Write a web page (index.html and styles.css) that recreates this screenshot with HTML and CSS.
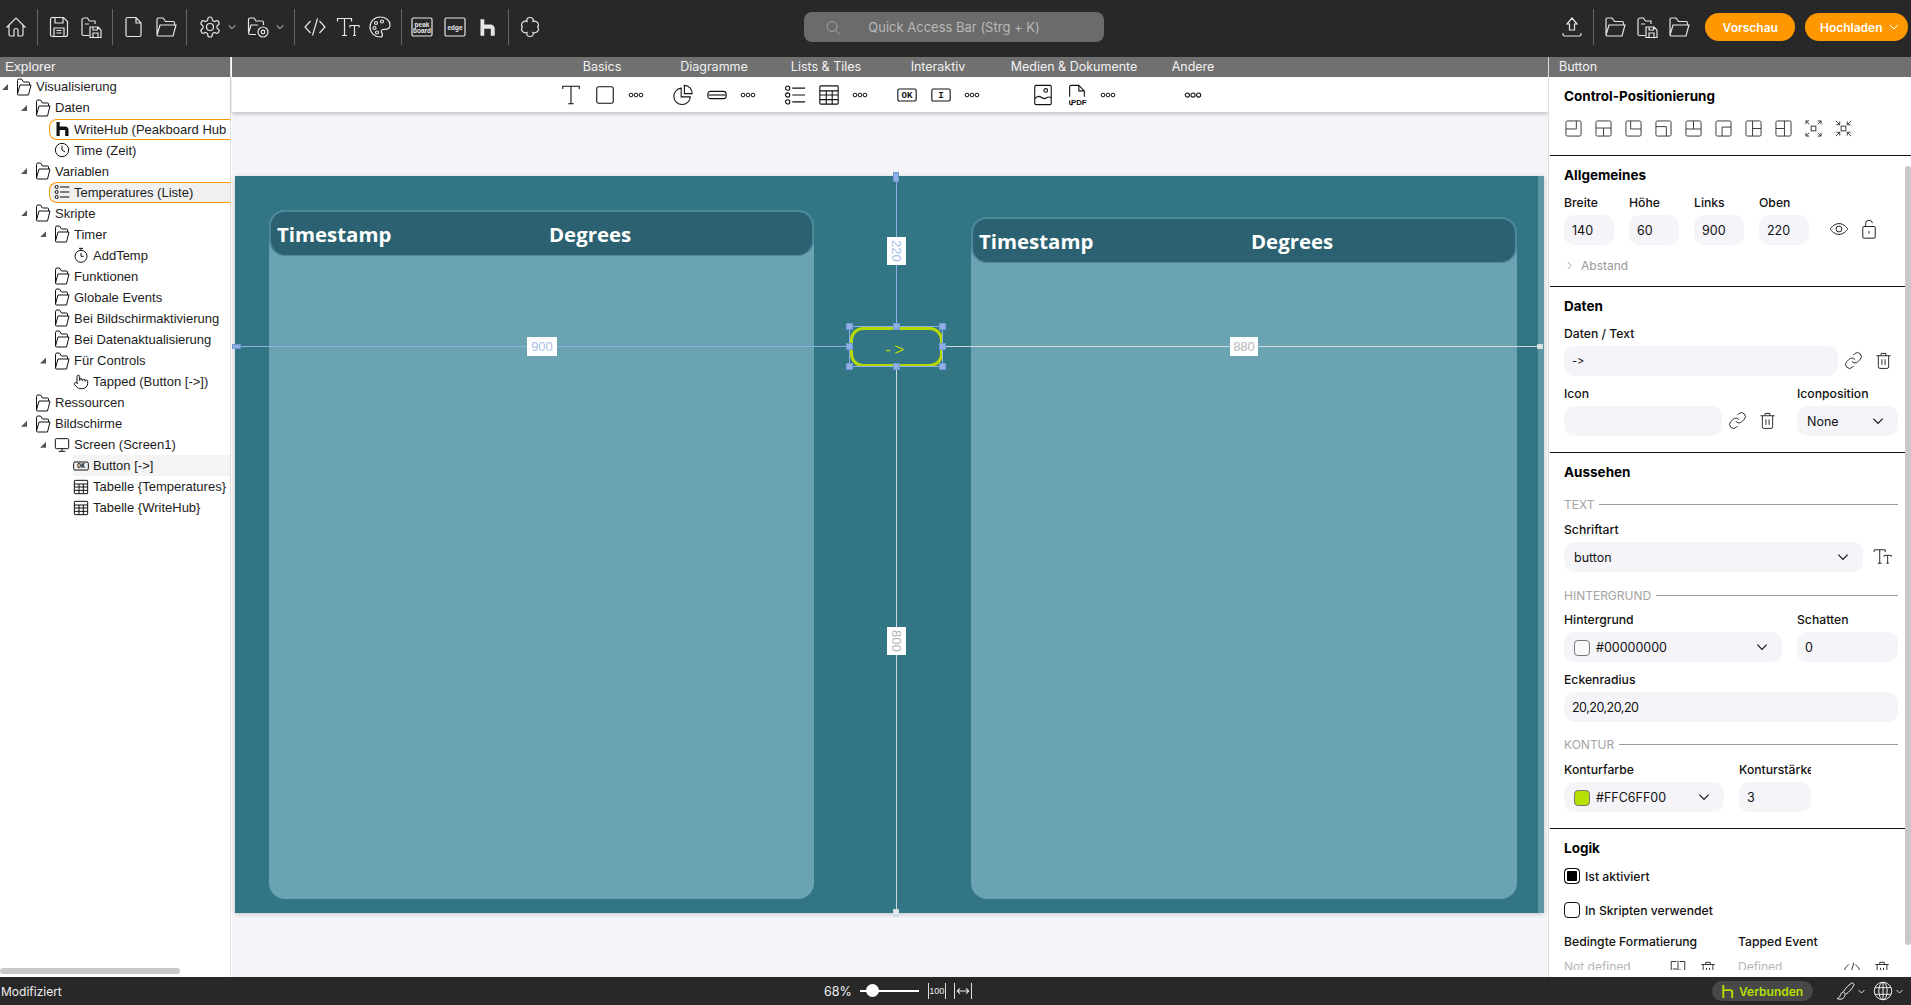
FILE: index.html
```html
<!DOCTYPE html>
<html lang="de">
<head>
<meta charset="utf-8">
<title>Peakboard Designer</title>
<link rel="stylesheet" href="styles.css">
</head>
<body>

<svg class="defs" width="0" height="0">
  <symbol id="home" viewBox="0 0 24 24"><path d="M2.500 12.500 12 3l9.500 9.500M5 10.500v9A1.500 1.500 0 0 0 6.500 21H10v-5.500a2 2 0 0 1 4 0V21h3.500a1.500 1.500 0 0 0 1.500-1.500v-9"/></symbol>
  <symbol id="save" viewBox="0 0 24 24"><path d="M6 2.500h10.500l4 4v13A2 2 0 0 1 18.500 21.500h-13a2 2 0 0 1-2-2v-15a2 2 0 0 1 2.500-2zM8 2.500V8h8V2.500M7 21.500V13h10v8.500M9.500 15.500h5M9.500 18h5"/></symbol>
  <symbol id="saveas" viewBox="0 0 24 24"><path d="M3 19V5a2 2 0 0 1 2-2h3.500l2 3h5.500v3M3 19a1.500 1.500 0 0 0 1.500 1.500H10M6 9h4M11 12h8l3 3v7.500H11zM14 22.500V18h5v4.500M14 12v3h4.500v-3"/></symbol>
  <symbol id="file" viewBox="0 0 24 24"><path d="M6.500 2.500H15l5 5.500v12a1.500 1.500 0 0 1-1.500 1.500h-12A1.500 1.500 0 0 1 5 20V4a1.500 1.500 0 0 1 1.500-1.500zM15 2.500V8h5"/></symbol>
  <symbol id="folder" viewBox="0 0 24 24"><path d="M3 20V4.500A1.500 1.500 0 0 1 4.500 3h4.500l2.500 3.500H19a1.500 1.500 0 0 1 1.500 1.500v2M3 20l3-10h16l-3 11H4.500A1.500 1.500 0 0 1 3 20z"/></symbol>
  <symbol id="tfolder" viewBox="0 0 15 18"><path d="M1 16V2.500A1.500 1.500 0 0 1 2.500 1H5l2 3h5a1 1 0 0 1 1 1v2M1 16l2.500-9H14.500L12 17H2a1 1 0 0 1-1-1z"/></symbol>
  <symbol id="gear" viewBox="0 0 24 24"><path d="M12.220 2h-.44a2 2 0 0 0-2 2v.18a2 2 0 0 1-1 1.730l-.43.250a2 2 0 0 1-2 0l-.15-.080a2 2 0 0 0-2.730.730l-.22.380a2 2 0 0 0 .730 2.730l.15.100a2 2 0 0 1 1 1.720v.510a2 2 0 0 1-1 1.740l-.15.090a2 2 0 0 0-.730 2.730l.22.380a2 2 0 0 0 2.730.730l.15-.080a2 2 0 0 1 2 0l.43.250a2 2 0 0 1 1 1.730V20a2 2 0 0 0 2 2h.44a2 2 0 0 0 2-2v-.18a2 2 0 0 1 1-1.730l.43-.250a2 2 0 0 1 2 0l.15.080a2 2 0 0 0 2.730-.730l.22-.390a2 2 0 0 0-.730-2.730l-.15-.080a2 2 0 0 1-1-1.740v-.5a2 2 0 0 1 1-1.740l.15-.090a2 2 0 0 0 .730-2.730l-.22-.380a2 2 0 0 0-2.730-.730l-.15.080a2 2 0 0 1-2 0l-.43-.250a2 2 0 0 1-1-1.730V4a2 2 0 0 0-2-2z"/><circle cx="12" cy="12" r="3.500"/></symbol>
  <symbol id="foldergear" viewBox="0 0 24 24"><path d="M2.500 18V4.500A1.500 1.500 0 0 1 4 3h4l2 3h6a1.500 1.500 0 0 1 1.500 1.500V10M2.500 18 5 10h7M2.500 18A1.500 1.500 0 0 0 4 19.500h6"/><circle cx="17" cy="17" r="5"/><circle cx="17" cy="17" r="1.800"/></symbol>
  <symbol id="code" viewBox="0 0 24 24"><path d="M7.500 6 2 12l5.500 6M16.500 6 22 12l-5.500 6M14.500 3.500l-5 17"/></symbol>
  <symbol id="tt" viewBox="0 0 24 24"><path d="M1.500 6.500V3.500h14v3M8.500 3.500V20.500M6 20.500h5M14 12.500v-2h9v2M18.500 10.500V20.500M17 20.500h3"/></symbol>
  <symbol id="bigt" viewBox="0 0 24 24"><path d="M3 5.500V2.500h18v3M12 2.500V21.500M9 21.500h6"/></symbol>
  <symbol id="palette" viewBox="0 0 24 24"><path d="M12 2a10 10 0 0 0 0 20c1.500 0 2.500-1 2.500-2.300 0-.6-.3-1.100-.6-1.600-.4-.5-.6-1-.6-1.600 0-1.300 1-2.200 2.300-2.200H18a4 4 0 0 0 4-4.300C22 5.500 17.500 2 12 2z"/><circle cx="8" cy="8" r="1.500"/><circle cx="14" cy="6.500" r="1.500"/><circle cx="6.500" cy="13" r="1.500"/><circle cx="9" cy="17.500" r="1.500"/></symbol>
  <symbol id="puzzle" viewBox="0 0 24 24"><path d="M9 6.500C8 3.500 10 2.500 12 2.500s4 1 3 4c3-1 5.500 1 5.500 3.500 0 1.500-1 2-1.500 2 .5 0 1.500.5 1.500 2 0 2.500-2.500 4.500-5.500 3.500 1 3-1 4-3 4s-4-1-3-4c-3 1-5.500-1-5.500-3.500 0-1.500 1-2 1.500-2-.5 0-1.500-.5-1.500-2C3.500 7.500 6 5.500 9 6.500z"/></symbol>
  <symbol id="upload" viewBox="0 0 24 24"><path d="M12 3l5 6h-2.500v6h-5V9H7zM3 18v1.500A1.500 1.500 0 0 0 4.500 21h15a1.500 1.500 0 0 0 1.500-1.500V18"/></symbol>
  <symbol id="search" viewBox="0 0 24 24"><circle cx="10.500" cy="10.500" r="7.500"/><path d="M16 16l6 6.500"/></symbol>
  <symbol id="chev" viewBox="0 0 24 24"><path d="M4 8l8 8 8-8"/></symbol>
  <symbol id="chevr" viewBox="0 0 24 24"><path d="M8 4l8 8-8 8"/></symbol>
  <symbol id="eye" viewBox="0 0 24 24"><path d="M1.500 12S5.500 5.500 12 5.500 22.500 12 22.500 12 18.500 18.500 12 18.500 1.500 12 1.500 12z"/><circle cx="12" cy="12" r="3.500"/></symbol>
  <symbol id="lock" viewBox="0 0 24 24"><rect x="4.500" y="9" width="15" height="14" rx="1.500"/><path d="M8 9V5a4 3.500 0 0 1 8 0M12 14.500v3"/></symbol>
  <symbol id="link" viewBox="0 0 24 24"><path d="M10 13a5 5 0 0 0 7.540.54l3-3a5 5 0 0 0-7.070-7.070l-1.720 1.710"/><path d="M14 11a5 5 0 0 0-7.540-.54l-3 3a5 5 0 0 0 7.070 7.070l1.710-1.710"/></symbol>
  <symbol id="trash" viewBox="0 0 24 24"><path d="M3 6h18M9 6V3h6v3M5.500 6v14a2 2 0 0 0 2 2h9a2 2 0 0 0 2-2V6M10 10.500v7M14 10.500v7"/></symbol>
  <symbol id="dots" viewBox="0 0 24 8"><circle cx="4.500" cy="4" r="2.800"/><circle cx="12" cy="4" r="2.800"/><circle cx="19.500" cy="4" r="2.800"/></symbol>
  <symbol id="pie" viewBox="0 0 24 24"><path d="M10 4.500a9 9 0 1 0 10 9.500H10zM13.500 1.500V10.500H22a8.500 8.500 0 0 0-8.500-9z"/></symbol>
  <symbol id="toggle" viewBox="0 0 24 24"><rect x="2" y="8" width="20" height="8" rx="3"/><path d="M2.500 12h19"/></symbol>
  <symbol id="list" viewBox="0 0 24 24"><circle cx="4" cy="4.500" r="2.300"/><circle cx="4" cy="12" r="2.300"/><circle cx="4" cy="19.500" r="2.300"/><path d="M9 4.500h14M9 12h14M9 19.500h14"/></symbol>
  <symbol id="table" viewBox="0 0 24 24"><rect x="2" y="2" width="20" height="20" rx="1"/><path d="M2 7.500h20M2 12h20M2 17h20M9 7.500V22M15.500 7.500V22"/></symbol>
  <symbol id="image" viewBox="0 0 24 24"><rect x="3" y="1.500" width="18" height="21" rx="1.500"/><circle cx="15" cy="7" r="2"/><path d="M3 16c3-3.500 5-3 7-1.500s4 2 6 .5 3-1 5 0"/></symbol>
  <symbol id="pdf" viewBox="0 0 24 24"><path d="M4 14V3a1.500 1.500 0 0 1 1.500-1.500H14l6 6V14M4 18v3a1.500 1.500 0 0 0 1.500 1.500H7M14 1.500v6h6"/></symbol>
  <symbol id="clock" viewBox="0 0 24 24"><circle cx="12" cy="12" r="10"/><path d="M12 5.500V12l4.500 3"/></symbol>
  <symbol id="timer" viewBox="0 0 24 24"><circle cx="12" cy="14" r="9"/><path d="M9 2h6M12 2v3M12 9v5h4"/></symbol>
  <symbol id="hand" viewBox="0 0 24 24"><path d="M18 11v-1a2 2 0 0 0-2-2 2 2 0 0 0-2 2M14 10V9a2 2 0 0 0-2-2 2 2 0 0 0-2 2v1M10 9.500V4a2 2 0 0 0-2-2 2 2 0 0 0-2 2v10M18 11a2 2 0 1 1 4 0v3a8 8 0 0 1-8 8h-2c-2.800 0-4.500-.860-5.990-2.340l-3.600-3.600a2 2 0 0 1 2.830-2.820L7 15"/></symbol>
  <symbol id="monitor" viewBox="0 0 24 24"><rect x="2" y="2.500" width="20" height="15" rx="1.500"/><path d="M12 17.500V21M7 21.500h10"/></symbol>
  <symbol id="brush" viewBox="0 0 24 24"><path d="M21 2c-4 2-8 6-11 11l3 3c4-3 8-7 10-12zM9.500 13.500C6.500 14 7 17 5.500 19c-.5.800-1.500 1.500-3 2 3 1.500 7 1 8.500-1.500 1-1.500.9-2.500.9-3.600"/></symbol>
  <symbol id="globe" viewBox="0 0 24 24"><circle cx="12" cy="12" r="10.500"/><ellipse cx="12" cy="12" rx="5" ry="10.500"/><path d="M12 1.500v21M2.500 8h19M2.500 16h19"/></symbol>
  <symbol id="swap" viewBox="0 0 24 24"><path d="M10 2H3v20h7M14 2h7v20h-7M12 1v22M5 12h6M14 12l3 3"/></symbol>
  <symbol id="arrows" viewBox="0 0 16 16"><path d="M1.500 8h13M4.500 5l-3 3 3 3M11.500 5l3 3-3 3"/></symbol>
  <symbol id="logo" viewBox="0 0 16 16"><path class="solid" d="M2.500 1h3.200v14H2.500zM5.700 5.500H11A3.500 3.500 0 0 1 14.500 9v6H11.200V9H5.700z"/></symbol>
  <symbol id="logoline" viewBox="0 0 16 16"><path class="solid" d="M2.500 1h2v14h-2zM4.500 5.500H11a3 3 0 0 1 3 3V15h-2V8.500a1 1 0 0 0-1-1H4.500z"/></symbol>
  <symbol id="pos1" viewBox="0 0 18 18"><rect x="1" y="1" width="16" height="16" rx="1.500"/><path d="M1 9.500h11V1"/></symbol>
  <symbol id="pos2" viewBox="0 0 18 18"><rect x="1" y="1" width="16" height="16" rx="1.500"/><path d="M1 8.500h16M9 8.500V17"/></symbol>
  <symbol id="pos3" viewBox="0 0 18 18"><rect x="1" y="1" width="16" height="16" rx="1.500"/><path d="M17 9.500H6V1"/></symbol>
  <symbol id="pos4" viewBox="0 0 18 18"><rect x="1" y="1" width="16" height="16" rx="1.500"/><path d="M1 7h11v10"/></symbol>
  <symbol id="pos5" viewBox="0 0 18 18"><rect x="1" y="1" width="16" height="16" rx="1.500"/><path d="M1 9.500h16M9 9.500V1"/></symbol>
  <symbol id="pos6" viewBox="0 0 18 18"><rect x="1" y="1" width="16" height="16" rx="1.500"/><path d="M17 7.500H7.500V17"/></symbol>
  <symbol id="pos7" viewBox="0 0 18 18"><rect x="1" y="1" width="16" height="16" rx="1.500"/><path d="M8 1v16M8 9h9"/></symbol>
  <symbol id="pos8" viewBox="0 0 18 18"><rect x="1" y="1" width="16" height="16" rx="1.500"/><path d="M10 1v16M1 9h9"/></symbol>
  <symbol id="expand" viewBox="0 0 18 18"><rect x="6.500" y="6.500" width="5" height="5"/><path d="M1 4.500V1h3.500M1 1l3.500 3.500M17 4.500V1h-3.500M17 1l-3.500 3.500M1 13.500V17h3.500M1 17l3.500-3.500M17 13.500V17h-3.500M17 17l-3.500-3.500"/></symbol>
  <symbol id="shrink" viewBox="0 0 18 18"><rect x="6.500" y="6.500" width="5" height="5"/><path d="M1 1l4 4M5 1.500V5H1.500M17 1l-4 4M13 1.500V5h3.500M1 17l4-4M5 16.500V13H1.500M17 17l-4-4M13 16.500V13h3.500"/></symbol>
</svg>

<div class="app">

  <header class="topbar">
    <div class="tools">
      <svg class="ic"><use href="#home"/></svg>
      <i class="sep"></i>
      <svg class="ic"><use href="#save"/></svg>
      <svg class="ic"><use href="#saveas"/></svg>
      <i class="sep"></i>
      <svg class="ic"><use href="#file"/></svg>
      <svg class="ic"><use href="#folder"/></svg>
      <i class="sep sep-a"></i>
      <svg class="ic"><use href="#gear"/></svg>
      <svg class="ic-chev"><use href="#chev"/></svg>
      <svg class="ic"><use href="#foldergear"/></svg>
      <svg class="ic-chev"><use href="#chev"/></svg>
      <i class="sep"></i>
      <svg class="ic"><use href="#code"/></svg>
      <svg class="ic"><use href="#tt"/></svg>
      <svg class="ic"><use href="#palette"/></svg>
      <i class="sep"></i>
      <svg class="ic" viewBox="0 0 24 24"><rect x="2" y="3" width="20" height="18" rx="1.500"/><text class="tiny" x="12" y="11.500" font-size="6.500">peak</text><text class="tiny" x="12" y="17.500" font-size="6.500">board</text></svg>
      <svg class="ic" viewBox="0 0 24 24"><rect x="2" y="3" width="20" height="18" rx="1.500"/><text class="tiny" x="12" y="14.500" font-size="6.500">edge</text></svg>
      <svg class="ic ic-logo"><use href="#logo"/></svg>
      <i class="sep sep-b"></i>
      <svg class="ic"><use href="#puzzle"/></svg>
    </div>

    <div class="quick">
      <svg class="quick-ic"><use href="#search"/></svg>
      <span>Quick Access Bar (Strg + K)</span>
    </div>

    <div class="tools tools-right">
      <svg class="ic"><use href="#upload"/></svg>
      <i class="sep"></i>
      <svg class="ic"><use href="#folder"/></svg>
      <svg class="ic"><use href="#saveas"/></svg>
      <svg class="ic"><use href="#folder"/></svg>
      <button class="btn btn-preview">Vorschau</button>
      <button class="btn btn-upload">Hochladen <svg class="btn-chev"><use href="#chev"/></svg></button>
    </div>
  </header>

  <div class="main">

    <aside class="explorer">
      <div class="band band-left">Explorer</div>
      <div class="tree">
        <div class="row l0"><span class="arrow on"></span><svg class="ti tf"><use href="#tfolder"/></svg>Visualisierung</div>
        <div class="row l1"><span class="arrow on"></span><svg class="ti tf"><use href="#tfolder"/></svg>Daten</div>
        <div class="row l2 sel"><svg class="ti"><use href="#logo"/></svg>WriteHub (Peakboard Hub</div>
        <div class="row l2"><span class="arrow"></span><svg class="ti"><use href="#clock"/></svg>Time (Zeit)</div>
        <div class="row l1"><span class="arrow on"></span><svg class="ti tf"><use href="#tfolder"/></svg>Variablen</div>
        <div class="row l2 sel sel-grey"><svg class="ti"><use href="#list"/></svg>Temperatures (Liste)</div>
        <div class="row l1"><span class="arrow on"></span><svg class="ti tf"><use href="#tfolder"/></svg>Skripte</div>
        <div class="row l2"><span class="arrow on"></span><svg class="ti tf"><use href="#tfolder"/></svg>Timer</div>
        <div class="row l3"><span class="arrow"></span><svg class="ti"><use href="#timer"/></svg>AddTemp</div>
        <div class="row l2"><span class="arrow"></span><svg class="ti tf"><use href="#tfolder"/></svg>Funktionen</div>
        <div class="row l2"><span class="arrow"></span><svg class="ti tf"><use href="#tfolder"/></svg>Globale Events</div>
        <div class="row l2"><span class="arrow"></span><svg class="ti tf"><use href="#tfolder"/></svg>Bei Bildschirmaktivierung</div>
        <div class="row l2"><span class="arrow"></span><svg class="ti tf"><use href="#tfolder"/></svg>Bei Datenaktualisierung</div>
        <div class="row l2"><span class="arrow on"></span><svg class="ti tf"><use href="#tfolder"/></svg>Für Controls</div>
        <div class="row l3"><span class="arrow"></span><svg class="ti"><use href="#hand"/></svg>Tapped (Button [-&gt;])</div>
        <div class="row l1"><span class="arrow"></span><svg class="ti tf"><use href="#tfolder"/></svg>Ressourcen</div>
        <div class="row l1"><span class="arrow on"></span><svg class="ti tf"><use href="#tfolder"/></svg>Bildschirme</div>
        <div class="row l2"><span class="arrow on"></span><svg class="ti"><use href="#monitor"/></svg>Screen (Screen1)</div>
        <div class="row l3 hover"><svg class="ti" viewBox="0 0 24 24"><rect x="1" y="6" width="22" height="12" rx="2"/><text class="tiny tiny-b" x="12" y="15.500" font-size="10">OK</text></svg>Button [-&gt;]</div>
        <div class="row l3"><span class="arrow"></span><svg class="ti"><use href="#table"/></svg>Tabelle {Temperatures}</div>
        <div class="row l3"><span class="arrow"></span><svg class="ti"><use href="#table"/></svg>Tabelle {WriteHub}</div>
      </div>
      <div class="hscroll"></div>
    </aside>

    <section class="center">
      <div class="band ribbon-grid">
        <span>Basics</span><span>Diagramme</span><span>Lists &amp; Tiles</span><span>Interaktiv</span><span>Medien &amp; Dokumente</span><span>Andere</span>
      </div>
      <div class="toolbar ribbon-grid">
        <div class="group">
          <svg class="ri"><use href="#bigt"/></svg>
          <svg class="ri" viewBox="0 0 24 24"><rect x="3" y="3" width="18" height="18" rx="2"/></svg>
          <svg class="rd" viewBox="0 0 24 8"><use href="#dots"/></svg>
        </div>
        <div class="group">
          <svg class="ri"><use href="#pie"/></svg>
          <svg class="ri"><use href="#toggle"/></svg>
          <svg class="rd" viewBox="0 0 24 8"><use href="#dots"/></svg>
        </div>
        <div class="group">
          <svg class="ri"><use href="#list"/></svg>
          <svg class="ri"><use href="#table"/></svg>
          <svg class="rd" viewBox="0 0 24 8"><use href="#dots"/></svg>
        </div>
        <div class="group">
          <svg class="ri" viewBox="0 0 24 24"><rect x="2" y="5.500" width="20" height="13" rx="1.500"/><text class="tiny tiny-b" x="12" y="15.500" font-size="10">OK</text></svg>
          <svg class="ri" viewBox="0 0 24 24"><rect x="2" y="5.500" width="20" height="13" rx="1.500"/><text class="tiny tiny-b" x="12" y="15.500" font-size="10">I</text></svg>
          <svg class="rd" viewBox="0 0 24 8"><use href="#dots"/></svg>
        </div>
        <div class="group">
          <svg class="ri"><use href="#image"/></svg>
          <svg class="ri" viewBox="0 0 24 24"><use href="#pdf"/><text class="tiny" x="14" y="22.500" font-size="8.500">PDF</text></svg>
          <svg class="rd" viewBox="0 0 24 8"><use href="#dots"/></svg>
        </div>
        <div class="group">
          <svg class="rd rd-big" viewBox="0 0 24 8"><use href="#dots"/></svg>
        </div>
      </div>

      <div class="stage">
        <div class="canvas">
          <div class="table table-one">
            <div class="thead"><span class="th-a">Timestamp</span><span>Degrees</span></div>
          </div>
          <div class="table table-two">
            <div class="thead"><span class="th-a">Timestamp</span><span>Degrees</span></div>
          </div>

          <div class="guide guide-left"></div>
          <div class="guide guide-right"></div>
          <div class="guide guide-top"></div>
          <div class="guide guide-bottom"></div>
          <div class="guide-end end-left"></div>
          <div class="guide-end end-right"></div>
          <div class="guide-end end-top"></div>
          <div class="guide-end end-bottom"></div>

          <div class="tag tag-900">900</div>
          <div class="tag tag-880">880</div>
          <div class="tag tag-v tag-220">220</div>
          <div class="tag tag-v tag-800">800</div>

          <div class="ctl">-&gt;</div>
          <div class="sel-box">
            <i class="grip g1"></i><i class="grip g2"></i><i class="grip g3"></i>
            <i class="grip g4"></i><i class="grip g5"></i>
            <i class="grip g6"></i><i class="grip g7"></i><i class="grip g8"></i>
          </div>
        </div>
      </div>
    </section>

    <aside class="panel">
      <div class="band band-panel">Button</div>
      <div class="props">

        <section class="sec sec-pos">
          <h3>Control-Positionierung</h3>
          <div class="pos-row">
            <svg class="pi"><use href="#pos1"/></svg>
            <svg class="pi"><use href="#pos2"/></svg>
            <svg class="pi"><use href="#pos3"/></svg>
            <svg class="pi"><use href="#pos4"/></svg>
            <svg class="pi"><use href="#pos5"/></svg>
            <svg class="pi"><use href="#pos6"/></svg>
            <svg class="pi"><use href="#pos7"/></svg>
            <svg class="pi"><use href="#pos8"/></svg>
            <svg class="pi"><use href="#expand"/></svg>
            <svg class="pi"><use href="#shrink"/></svg>
          </div>
        </section>

        <section class="sec sec-gen">
          <h3>Allgemeines</h3>
          <div class="fields">
            <div class="f w50"><label>Breite</label><div class="inp">140</div></div>
            <div class="f w50"><label>Höhe</label><div class="inp">60</div></div>
            <div class="f w50"><label>Links</label><div class="inp">900</div></div>
            <div class="f w50"><label>Oben</label><div class="inp">220</div></div>
            <svg class="act act-eye"><use href="#eye"/></svg>
            <svg class="act act-lock"><use href="#lock"/></svg>
          </div>
          <div class="more"><svg class="more-chev"><use href="#chevr"/></svg>Abstand</div>
        </section>

        <section class="sec sec-data">
          <h3>Daten</h3>
          <div class="fields">
            <div class="f w274"><label>Daten / Text</label><div class="inp inp-small">-&gt;</div></div>
            <svg class="act act-first"><use href="#link"/></svg>
            <svg class="act"><use href="#trash"/></svg>
          </div>
          <div class="fields">
            <div class="f w158"><label>Icon</label><div class="inp"></div></div>
            <svg class="act act-first"><use href="#link"/></svg>
            <svg class="act"><use href="#trash"/></svg>
            <div class="f w101 f-pos"><label>Iconposition</label><div class="inp sel-inp">None<svg class="dd"><use href="#chev"/></svg></div></div>
          </div>
        </section>

        <section class="sec sec-look">
          <h3>Aussehen</h3>
          <div class="cap"><span>TEXT</span></div>
          <div class="fields">
            <div class="f w299"><label>Schriftart</label><div class="inp sel-inp">button<svg class="dd"><use href="#chev"/></svg></div></div>
            <svg class="act act-tt"><use href="#tt"/></svg>
          </div>
          <div class="cap cap-next"><span>HINTERGRUND</span></div>
          <div class="fields fields-tight">
            <div class="f w218"><label>Hintergrund</label><div class="inp sel-inp"><i class="swatch"></i>#00000000<svg class="dd"><use href="#chev"/></svg></div></div>
            <div class="f w101 f-shadow"><label>Schatten</label><div class="inp">0</div></div>
          </div>
          <div class="fields">
            <div class="f wfull"><label>Eckenradius</label><div class="inp inp-tight">20,20,20,20</div></div>
          </div>
          <div class="cap"><span>KONTUR</span></div>
          <div class="fields">
            <div class="f w160"><label>Konturfarbe</label><div class="inp sel-inp"><i class="swatch swatch-lime"></i>#FFC6FF00<svg class="dd"><use href="#chev"/></svg></div></div>
            <div class="f w72"><label>Konturstärke</label><div class="inp">3</div></div>
          </div>
        </section>

        <section class="sec sec-logic">
          <h3>Logik</h3>
          <div class="check check-first"><i class="box box-on"></i>Ist aktiviert</div>
          <div class="check"><i class="box"></i>In Skripten verwendet</div>
          <div class="logic-cols">
            <div class="lc lc-a">
              <label>Bedingte Formatierung</label>
              <div class="lc-row"><span>Not defined</span><svg class="act"><use href="#swap"/></svg><svg class="act"><use href="#trash"/></svg></div>
            </div>
            <div class="lc lc-b">
              <label>Tapped Event</label>
              <div class="lc-row"><span>Defined</span><svg class="act"><use href="#code"/></svg><svg class="act"><use href="#trash"/></svg></div>
            </div>
          </div>
        </section>
      </div>
      <div class="vscroll"></div>
    </aside>
  </div>

  <footer class="status">
    <span class="status-left">Modifiziert</span>
    <div class="zoombox">
      <span class="pct">68%</span>
      <div class="slider"><i></i></div>
      <span class="fit">100</span>
      <span class="fit"><svg class="fit-ic"><use href="#arrows"/></svg></span>
    </div>
    <div class="status-right">
      <div class="conn"><svg class="conn-ic"><use href="#logoline"/></svg>Verbunden</div>
      <svg class="st-ic"><use href="#brush"/></svg><svg class="st-chev"><use href="#chev"/></svg>
      <svg class="st-ic st-globe"><use href="#globe"/></svg><svg class="st-chev"><use href="#chev"/></svg>
    </div>
  </footer>
</div>

</body>
</html>
```

FILE: styles.css
```css
* { box-sizing: border-box; }

html, body {
  margin: 0;
  height: 100%;
  overflow: hidden;
  background: #fff;
}

body {
  font-family: "Inter", "Liberation Sans", sans-serif;
  font-size: 12px;
  color: #111;
  font-feature-settings: "calt" 0;
}

.defs { position: absolute; }

svg {
  fill: none;
  stroke: currentColor;
  stroke-width: 1.2;
  display: block;
  flex: none;
}
.solid { fill: currentColor; stroke: none; }
.tiny {
  font-family: "Liberation Sans", sans-serif;
  fill: currentColor;
  stroke: none;
  text-anchor: middle;
  font-weight: bold;
}
.tiny-b { font-family: "Liberation Mono", monospace; }

.app {
  display: flex;
  flex-direction: column;
  height: 1005px;
}

/* top bar */
.topbar {
  height: 57px;
  flex: none;
  background: #282828;
  color: #e6e6e6;
  display: flex;
  align-items: center;
  padding: 0 3px 3px 4px;
}
.tools {
  display: flex;
  align-items: center;
  gap: 8.250px;
}
.ic { width: 24px; height: 24px; }
.ic-logo { height: 19px; }
.ic-chev { width: 10px; height: 10px; margin-left: -3px; stroke-width: 2.400; }
.sep {
  width: 1px;
  height: 36px;
  margin: 0 .5px;
  background: #666;
}
.sep-a { margin-right: 2.500px; }
.sep-b { margin-right: 1.500px; }
.quick {
  width: 300px;
  height: 30px;
  margin-left: 262px;
  border-radius: 8px;
  background: #6b6b6b;
  color: #b9b9b9;
  font-size: 13px;
  display: flex;
  align-items: center;
  padding-left: 21px;
}
.quick-ic { width: 16px; height: 17px; margin-right: 27px; stroke-width: 1.1; }
.tools-right { margin-left: auto; }
.btn {
  height: 28px;
  border: 0;
  border-radius: 14px;
  background: #ff9800;
  color: #fff;
  font-family: inherit;
  font-size: 12px;
  font-weight: 600;
  display: flex;
  align-items: center;
  padding: 0;
}
.btn-preview { width: 90px; margin-left: 6px; justify-content: center; }
.btn-upload { width: 103px; margin-left: 1.500px; padding-left: 15px; gap: 5px; }
.btn-chev { width: 12px; height: 12px; stroke-width: 2; }

/* layout */
.main {
  flex: 1;
  display: flex;
  min-height: 0;
}
.band {
  height: 20px;
  flex: none;
  background: #707070;
  color: #f2f2f2;
  font-size: 12.500px;
  line-height: 20px;
}
.band-left { padding-left: 5px; font-family: "Liberation Sans", sans-serif; font-size: 13.600px; }
.band-panel { padding-left: 10px; }

/* explorer */
.explorer {
  width: 231px;
  flex: none;
  display: flex;
  flex-direction: column;
  border-right: 1px solid #ddd;
  position: relative;
}
.tree {
  flex: 1;
  margin-top: -.6px;
  font-family: "Liberation Sans", sans-serif;
  font-size: 13px;
  color: #1c1c1c;
  white-space: nowrap;
  overflow: hidden;
}
.row {
  height: 21.050px;
  display: flex;
  align-items: center;
}
.l0 { padding-left: 2px; }
.l1 { padding-left: 21px; }
.l2 { padding-left: 40px; }
.l3 { padding-left: 59px; }
.arrow { width: 14px; height: 6px; flex: none; }
.arrow.on::before {
  content: "";
  display: block;
  width: 6px;
  height: 6px;
  background: #555;
  clip-path: polygon(100% 0, 100% 100%, 0 100%);
}
.ti { width: 16px; height: 16px; margin-right: 4px; stroke-width: 1.500; color: #111; }
.tf { height: 18px; stroke-width: 1; }
.sel {
  margin-left: 49px;
  padding-left: 4px;
  border: 1px solid #ff9800;
  border-right: 0;
  border-radius: 8px 0 0 8px;
}
.sel-grey { background: #f0f0f0; }
.hover {
  margin-left: 73px;
  padding-left: 0;
  background: #f4f4f4;
}
.hscroll {
  position: absolute;
  left: 0;
  bottom: 3px;
  width: 180px;
  height: 6px;
  border-radius: 3px;
  background: #c8c8c8;
}

/* center */
.center {
  flex: 1;
  min-width: 0;
  display: flex;
  flex-direction: column;
  border-left: 1px solid #fff;
}
.ribbon-grid {
  display: grid;
  grid-template-columns: 112px 112px 112px 112px 160px 78px;
  padding-left: 314px;
  text-align: center;
}
.toolbar {
  height: 35px;
  flex: none;
  background: #fff;
  box-shadow: 0 2px 4px rgba(0, 0, 0, .22);
  position: relative;
  color: #111;
}
.group {
  display: flex;
  align-items: center;
  justify-content: center;
  gap: 12px;
}
.ri { width: 22px; height: 22px; }
.rd { width: 16px; height: 6px; stroke-width: 1.500; }
.rd-big { width: 18px; stroke-width: 1.400; }

.stage {
  flex: 1;
  min-height: 0;
  background: #f4f4f9;
  padding: 64px 0 0 3px;
}
.canvas {
  position: relative;
  width: 1309px;
  height: 737px;
  background: #327686;
  border-right: 6px solid #5f97a5;
  box-shadow: 0 1px 5px rgba(0, 0, 0, .2);
}

.table {
  position: absolute;
  background: #6aa3b2;
  border-radius: 16px;
}
.table-one { left: 34px; top: 34px; width: 545px; height: 689px; }
.table-two { left: 736px; top: 41px; width: 546px; height: 682px; }
.thead {
  height: 46px;
  display: flex;
  align-items: center;
  padding-left: 6px;
  background: #2b6170;
  border: 2px solid #4a8797;
  border-bottom-width: 1px;
  border-radius: 16px;
  color: #fff;
  font-family: "Open Sans", sans-serif;
  font-size: 20.400px;
  font-weight: 700;
}
.th-a { width: 272px; }

/* selection guides */
.guide { position: absolute; background: #8fb0e3; }
.guide-left { left: 0; top: 170px; width: 614px; height: 1px; }
.guide-right { left: 710px; top: 170px; width: 598px; height: 1px; background: #cdd8dc; }
.guide-top { left: 661px; top: 0; width: 1px; height: 150px; }
.guide-bottom { left: 661px; top: 191px; width: 1px; height: 546px; background: #cdd8dc; }
.guide-end {
  position: absolute;
  background: #8fb0e3;
  border: 1px solid #6f98d4;
}
.end-left { left: -3px; top: 168px; width: 9px; height: 5px; }
.end-right { left: 1302px; top: 168px; width: 6px; height: 5px; background: #dfe6ea; border-color: #cdd8dc; }
.end-top { left: 658px; top: -4px; width: 6px; height: 10px; }
.end-bottom { left: 658px; top: 733px; width: 6px; height: 8px; background: #dfe6ea; border-color: #cdd8dc; }

.tag {
  position: absolute;
  background: #fff;
  color: #a7bfe9;
  font-family: "Liberation Sans", sans-serif;
  font-size: 13px;
  display: flex;
  align-items: center;
  justify-content: center;
}
.tag-900 { left: 292px; top: 161px; width: 30px; height: 19px; }
.tag-880 { left: 995px; top: 161px; width: 28px; height: 19px; color: #b5b5b5; }
.tag-v { width: 19px; height: 28px; writing-mode: vertical-rl; }
.tag-220 { left: 652px; top: 61px; }
.tag-800 { left: 652px; top: 451px; color: #b5b5b5; }

.ctl {
  position: absolute;
  left: 615px;
  top: 151px;
  width: 93px;
  height: 40px;
  border: 3px solid #b5d800;
  border-radius: 13px;
  color: #b5d800;
  font-family: "Liberation Sans", sans-serif;
  font-size: 17px;
  letter-spacing: 3.500px;
  padding-top: 11px;
  line-height: 18px;
  text-align: center;
}
.sel-box {
  position: absolute;
  left: 614px;
  top: 150px;
  width: 94px;
  height: 41px;
  border: 1px solid #8fb0e3;
}
.grip {
  position: absolute;
  width: 7px;
  height: 7px;
  background: #8fb0e3;
  border: 1px solid #6f98d4;
}
.g1 { left: -4px; top: -4px; }
.g2 { left: 43px; top: -4px; }
.g3 { right: -4px; top: -4px; }
.g4 { left: -4px; top: 16px; }
.g5 { right: -4px; top: 16px; }
.g6 { left: -4px; bottom: -4px; }
.g7 { left: 43px; bottom: -4px; }
.g8 { right: -4px; bottom: -4px; }

/* properties */
.panel {
  width: 363px;
  flex: none;
  display: flex;
  flex-direction: column;
  border-left: 1px solid #ddd;
  position: relative;
  z-index: 2;
  background: #fff;
}
.props {
  flex: 1;
  min-height: 0;
  overflow: hidden;
  padding-left: 1px;
  margin-bottom: 7px;
}
.sec {
  padding: 9px 0 16px 14px;
  border-bottom: 1px solid #111;
}
.sec h3 {
  margin: 0;
  height: 20px;
  font-size: 13.500px;
  font-weight: 700;
  line-height: 20px;
  color: #000;
}
.sec-pos { padding-bottom: 18px; }
.sec-gen { padding-bottom: 13px; }
.sec-logic { border-bottom: 0; }

.pos-row { display: flex; gap: 13px; margin-top: 14px; padding-left: 1px; color: #333; }
.pi { width: 17px; height: 17px; stroke-width: 1; }

.fields {
  display: flex;
  align-items: flex-end;
  margin-top: 10px;
}
.fields-tight { margin-top: 9px; }
.f label {
  display: block;
  height: 16px;
  line-height: 16px;
  margin-bottom: 4px;
  font-size: 12.200px;
  font-weight: 500;
  color: #111;
  white-space: nowrap;
  overflow: hidden;
}
.inp {
  height: 30px;
  border-radius: 10px;
  background: #f4f4f9;
  line-height: 31px;
  padding-left: 8px;
  font-size: 12.500px;
  color: #111;
  position: relative;
  white-space: nowrap;
}
.inp-small { font-size: 11px; }
.inp-tight { letter-spacing: -.5px; }
.sel-inp { padding: 1px 0 0 10px; display: flex; align-items: center; }
.dd {
  position: absolute;
  right: 13px;
  top: 8px;
  width: 14px;
  height: 14px;
  stroke-width: 2;
}
.swatch {
  width: 16px;
  height: 16px;
  border: 1px solid #777;
  border-radius: 4px;
  margin-right: 6px;
  flex: none;
  background: #fbfbfd;
}
.swatch-lime { background: #b5e000; }

.w50 { width: 50px; margin-right: 15px; }
.w274 { width: 274px; }
.w158 { width: 158px; }
.w101 { width: 101px; }
.w299 { width: 299px; }
.w218 { width: 218px; }
.w160 { width: 160px; }
.w72 { width: 72px; margin-left: 15px; }
.wfull { width: 334px; }
.f-pos { margin-left: 20px; }
.f-shadow { margin-left: 15px; }

.act {
  width: 19px;
  height: 19px;
  margin-left: 11px;
  margin-bottom: 6px;
  color: #222;
}
.act-first { margin-left: 6px; }
.act-eye { margin-left: 5px; width: 20px; height: 20px; }
.act-lock { margin-left: 10px; width: 20px; height: 20px; }
.act-tt { margin-left: 10px; }

.more {
  height: 16px;
  margin-top: 12px;
  display: flex;
  align-items: center;
  color: #9a9a9a;
  font-size: 12px;
}
.more-chev { width: 11px; height: 13px; margin-right: 6px; stroke-width: 2; }

.cap {
  display: flex;
  align-items: center;
  height: 16px;
  margin-top: 14px;
  margin-right: 13px;
  gap: 5px;
  color: #a4a4a4;
  font-size: 12px;
}
.cap::after {
  content: "";
  flex: 1;
  height: 1px;
  background: #9a9a9a;
}
.cap-next { margin-top: 15px; }

.check {
  display: flex;
  align-items: center;
  height: 16px;
  margin-top: 18px;
  font-size: 12.200px;
  font-weight: 500;
  gap: 5px;
}
.check-first { margin-top: 10px; }
.box {
  width: 16px;
  height: 16px;
  border: 1px solid #111;
  border-radius: 4px;
  flex: none;
}
.box-on {
  background: #000;
  box-shadow: inset 0 0 0 2px #fff;
}
.logic-cols { display: flex; margin-top: 16px; }
.lc-a { width: 174px; }
.lc-b { width: 160px; }
.lc label {
  display: block;
  height: 16px;
  line-height: 16px;
  font-size: 12.200px;
  font-weight: 500;
  white-space: nowrap;
}
.lc-row {
  display: flex;
  align-items: flex-start;
  margin-top: 10px;
  height: 18px;
  color: #b5b5b5;
}
.lc-row span { flex: 1; margin-top: -1px; }
.lc-row .act { margin: 0 0 0 12px; width: 18px; height: 18px; color: #222; }
.lc-a .lc-row { padding-right: 21px; }
.lc-b .lc-row { padding-right: 7px; }

.vscroll {
  position: absolute;
  right: 0;
  top: 109px;
  width: 6px;
  height: 779px;
  border-radius: 3px;
  background: #c8c8c8;
}

/* status bar */
.status {
  height: 28px;
  flex: none;
  background: #282828;
  color: #efefef;
  display: flex;
  align-items: center;
  position: relative;
  z-index: 3;
}
.status-left { padding-left: 1px; width: 824px; }
.zoombox {
  display: flex;
  align-items: center;
}
.pct { font-size: 12.500px; }
.slider {
  width: 59px;
  height: 2px;
  margin: 0 9px 0 8px;
  background: #fff;
  position: relative;
}
.slider i {
  position: absolute;
  left: 6px;
  top: -6px;
  width: 13px;
  height: 13px;
  border-radius: 50%;
  background: #fff;
}
.fit {
  width: 18px;
  height: 16px;
  margin-right: 8px;
  border-left: 1px solid #ddd;
  border-right: 1px solid #ddd;
  font-family: "Liberation Sans", sans-serif;
  font-size: 9px;
  line-height: 16px;
  text-align: center;
  display: flex;
  align-items: center;
  justify-content: center;
}
.fit-ic { width: 14px; height: 14px; }
.status-right {
  margin-left: auto;
  display: flex;
  align-items: center;
  padding-right: 7.500px;
}
.conn {
  width: 101px;
  height: 20px;
  border-radius: 10px;
  background: #484848;
  color: #b5e000;
  font-weight: 600;
  display: flex;
  align-items: center;
  padding-left: 8px;
  gap: 4px;
}
.conn-ic { width: 15px; height: 15px; }
.st-ic { width: 20px; height: 20px; margin-left: 22px; }
.st-globe { margin-left: 7.500px; }
.st-chev { width: 9px; height: 9px; margin-left: 1.500px; stroke-width: 2.400; }
```
